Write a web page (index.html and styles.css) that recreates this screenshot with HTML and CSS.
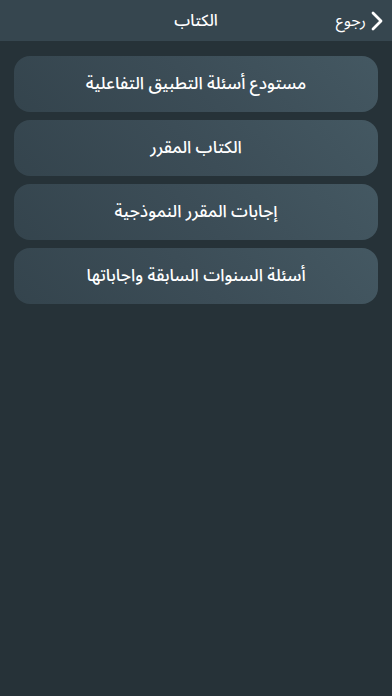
FILE: index.html
```html
<!DOCTYPE html>
<html lang="ar" dir="rtl">
<head>
<meta charset="utf-8">
<link rel="stylesheet" href="styles.css">
</head>
<body>
<header class="nav">
  <div class="back">
    <svg class="chev" width="12" height="20" viewBox="0 0 12 20"><path d="M2 2 L10 10 L2 18" fill="none" stroke="#fff" stroke-width="2.8" stroke-linecap="round" stroke-linejoin="round"/></svg>
    <span class="back-label">رجوع</span>
  </div>
  <h1 class="title">الكتاب</h1>
</header>
<main class="list">
  <div class="item">مستودع أسئلة التطبيق التفاعلية</div>
  <div class="item">الكتاب المقرر</div>
  <div class="item">إجابات المقرر النموذجية</div>
  <div class="item">أسئلة السنوات السابقة واجاباتها</div>
</main>
</body>
</html>
```
FILE: styles.css
```css
html, body {
  margin: 0;
  padding: 0;
  height: 100%;
}
body {
  background: #263238;
  font-family: "Noto Sans Arabic", "Noto Sans", "DejaVu Sans", sans-serif;
  color: #fff;
}
.nav {
  height: 41px;
  background: #36464f;
  display: flex;
  align-items: center;
  justify-content: center;
  position: relative;
}
.title {
  margin: 0;
  font-size: 16px;
  font-weight: 500;
}
.back {
  position: absolute;
  right: 9px;
  top: 0;
  height: 41px;
  display: flex;
  align-items: center;
  gap: 5px;
}
.back-label {
  font-size: 16px;
}
.chev {
  display: block;
}
.list {
  display: flex;
  flex-direction: column;
  gap: 8px;
  padding: 15px 14px;
}
.item {
  height: 56px;
  border-radius: 16px;
  background: linear-gradient(45deg, #34444d 0%, #3c4d57 50%, #445862 100%);
  display: flex;
  align-items: center;
  justify-content: center;
  font-size: 17px;
  font-weight: 500;
}
```
